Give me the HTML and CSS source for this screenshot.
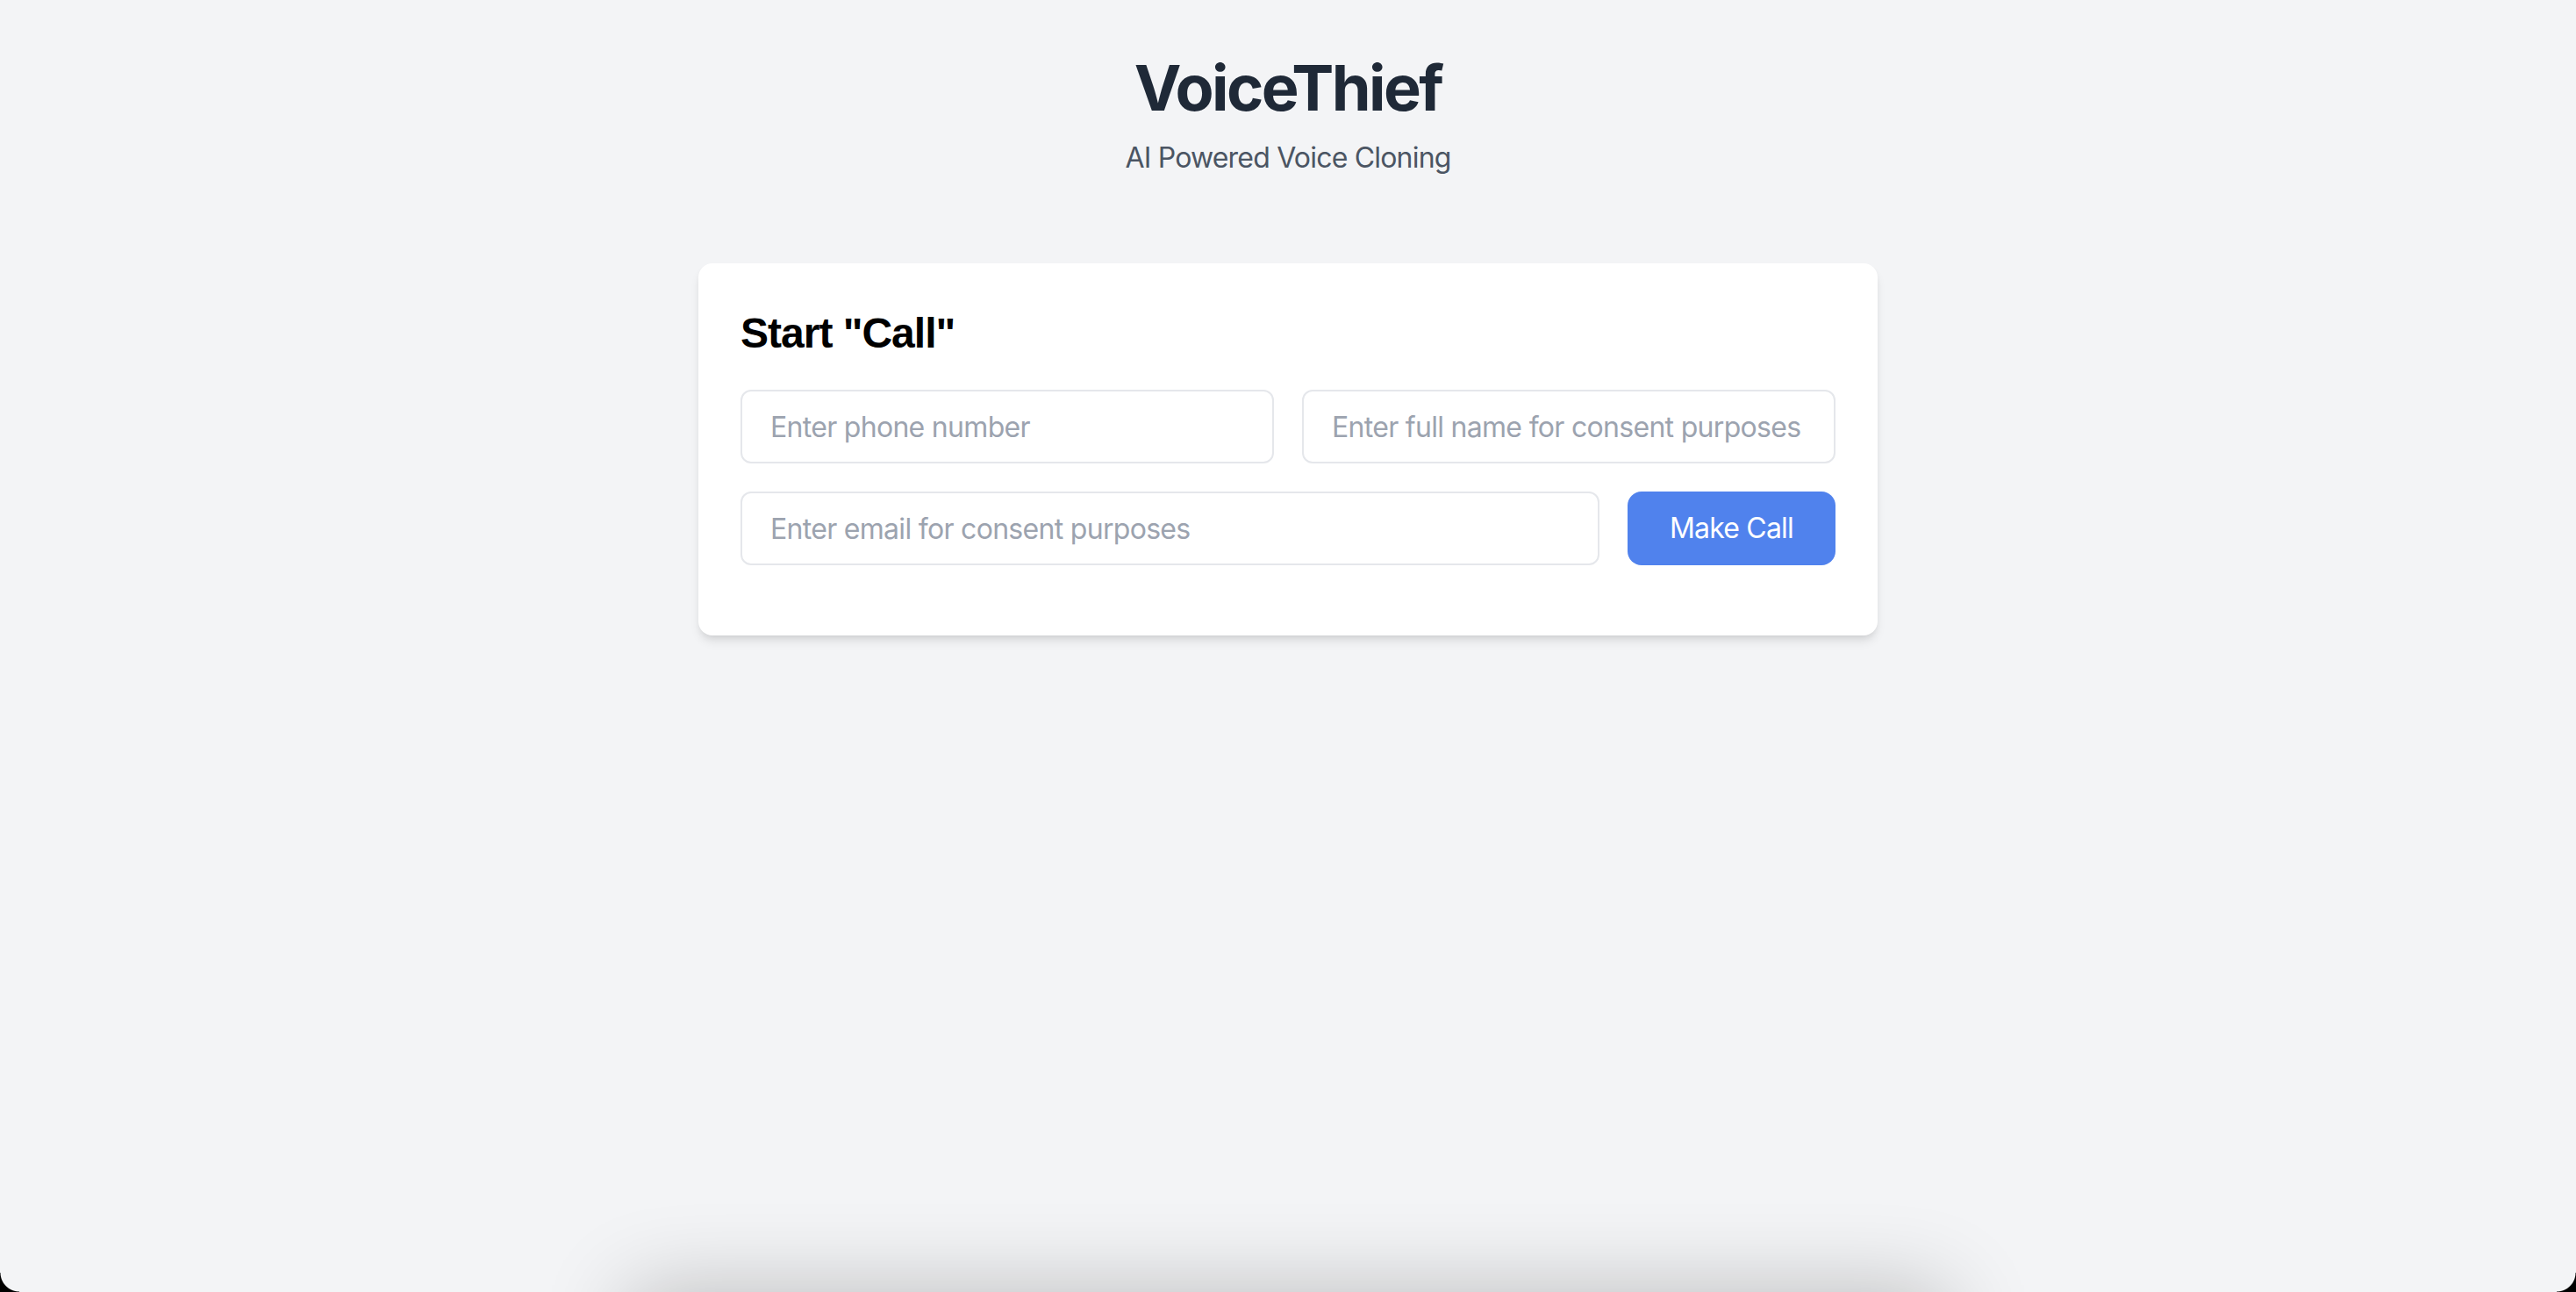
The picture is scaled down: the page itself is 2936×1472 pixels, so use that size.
FILE: index.html
```html
<!DOCTYPE html>
<html lang="en">
<head>
<meta charset="utf-8">
<title>VoiceThief</title>
<link rel="stylesheet" href="styles.css">
</head>
<body>
<main class="page">
  <header class="hero">
    <h1 class="title">VoiceThief</h1>
    <p class="subtitle">AI Powered Voice Cloning</p>
  </header>
  <section class="card">
    <h2 class="card-title">Start "Call"</h2>
    <div class="row row-two">
      <input class="field" type="tel" placeholder="Enter phone number">
      <input class="field" type="text" placeholder="Enter full name for consent purposes">
    </div>
    <div class="row row-action">
      <input class="field field-grow" type="email" placeholder="Enter email for consent purposes">
      <button class="btn" type="button">Make Call</button>
    </div>
  </section>
</main>
<div class="below-fold"></div>
<div class="corner corner-left"></div>
<div class="corner corner-right"></div>
</body>
</html>
```

FILE: styles.css
```css
html, body {
  margin: 0;
  padding: 0;
  height: 100%;
  overflow: hidden;
}
body {
  background: #f3f4f6;
  font-family: Inter, "Noto Sans", sans-serif;
}
.page {
  padding-top: 60px;
}
.hero {
  text-align: center;
}
.title {
  margin: 0;
  font-size: 72px;
  line-height: 80px;
  font-weight: 700;
  color: #1f2937;
  letter-spacing: -2.6px;
}
.subtitle {
  margin: 16px 0 0;
  font-size: 32px;
  line-height: 48px;
  color: #4b5563;
  letter-spacing: -0.8px;
}
.card {
  box-sizing: border-box;
  width: 1344px;
  margin: 96px auto 0;
  padding: 48px 48px 80px;
  background: #fff;
  border-radius: 16px;
  box-shadow: 0 8px 12px -2px rgba(0,0,0,0.1), 0 4px 8px -4px rgba(0,0,0,0.1);
}
.card-title {
  margin: 0 0 32px;
  font-family: "Liberation Sans", Arial, sans-serif;
  font-size: 48px;
  line-height: 64px;
  font-weight: 700;
  color: #000;
  letter-spacing: -1px;
}
.row {
  gap: 32px;
}
.row-two {
  display: grid;
  grid-template-columns: 1fr 1fr;
}
.row-action {
  display: flex;
  margin-top: 32px;
}
.field {
  box-sizing: border-box;
  min-width: 0;
  height: 84px;
  padding: 16px 32px;
  border: 2px solid #e5e7eb;
  border-radius: 12px;
  background: #fff;
  font-family: Inter, "Noto Sans", sans-serif;
  font-size: 32px;
  line-height: 48px;
  letter-spacing: -0.7px;
  color: #111827;
  outline: none;
}
.field::placeholder {
  color: #9ca3af;
}
.field-grow {
  flex: 1;
}
.btn {
  height: 84px;
  padding: 0 48px;
  border: none;
  border-radius: 16px;
  background: #5082ed;
  color: #fff;
  font-family: Inter, "Noto Sans", sans-serif;
  font-size: 32px;
  line-height: 48px;
  letter-spacing: -0.8px;
}
.below-fold {
  position: fixed;
  left: 50%;
  top: 100%;
  width: 1500px;
  height: 200px;
  margin-left: -750px;
  background: #fff;
  box-shadow: 0 0 100px rgba(0,0,0,0.24);
}
.corner {
  position: fixed;
  bottom: 0;
  width: 22px;
  height: 22px;
}
.corner-left {
  left: 0;
  background: radial-gradient(circle at 100% 0, transparent 21px, #000 22px);
}
.corner-right {
  right: 0;
  background: radial-gradient(circle at 0 0, transparent 21px, #000 22px);
}
```
